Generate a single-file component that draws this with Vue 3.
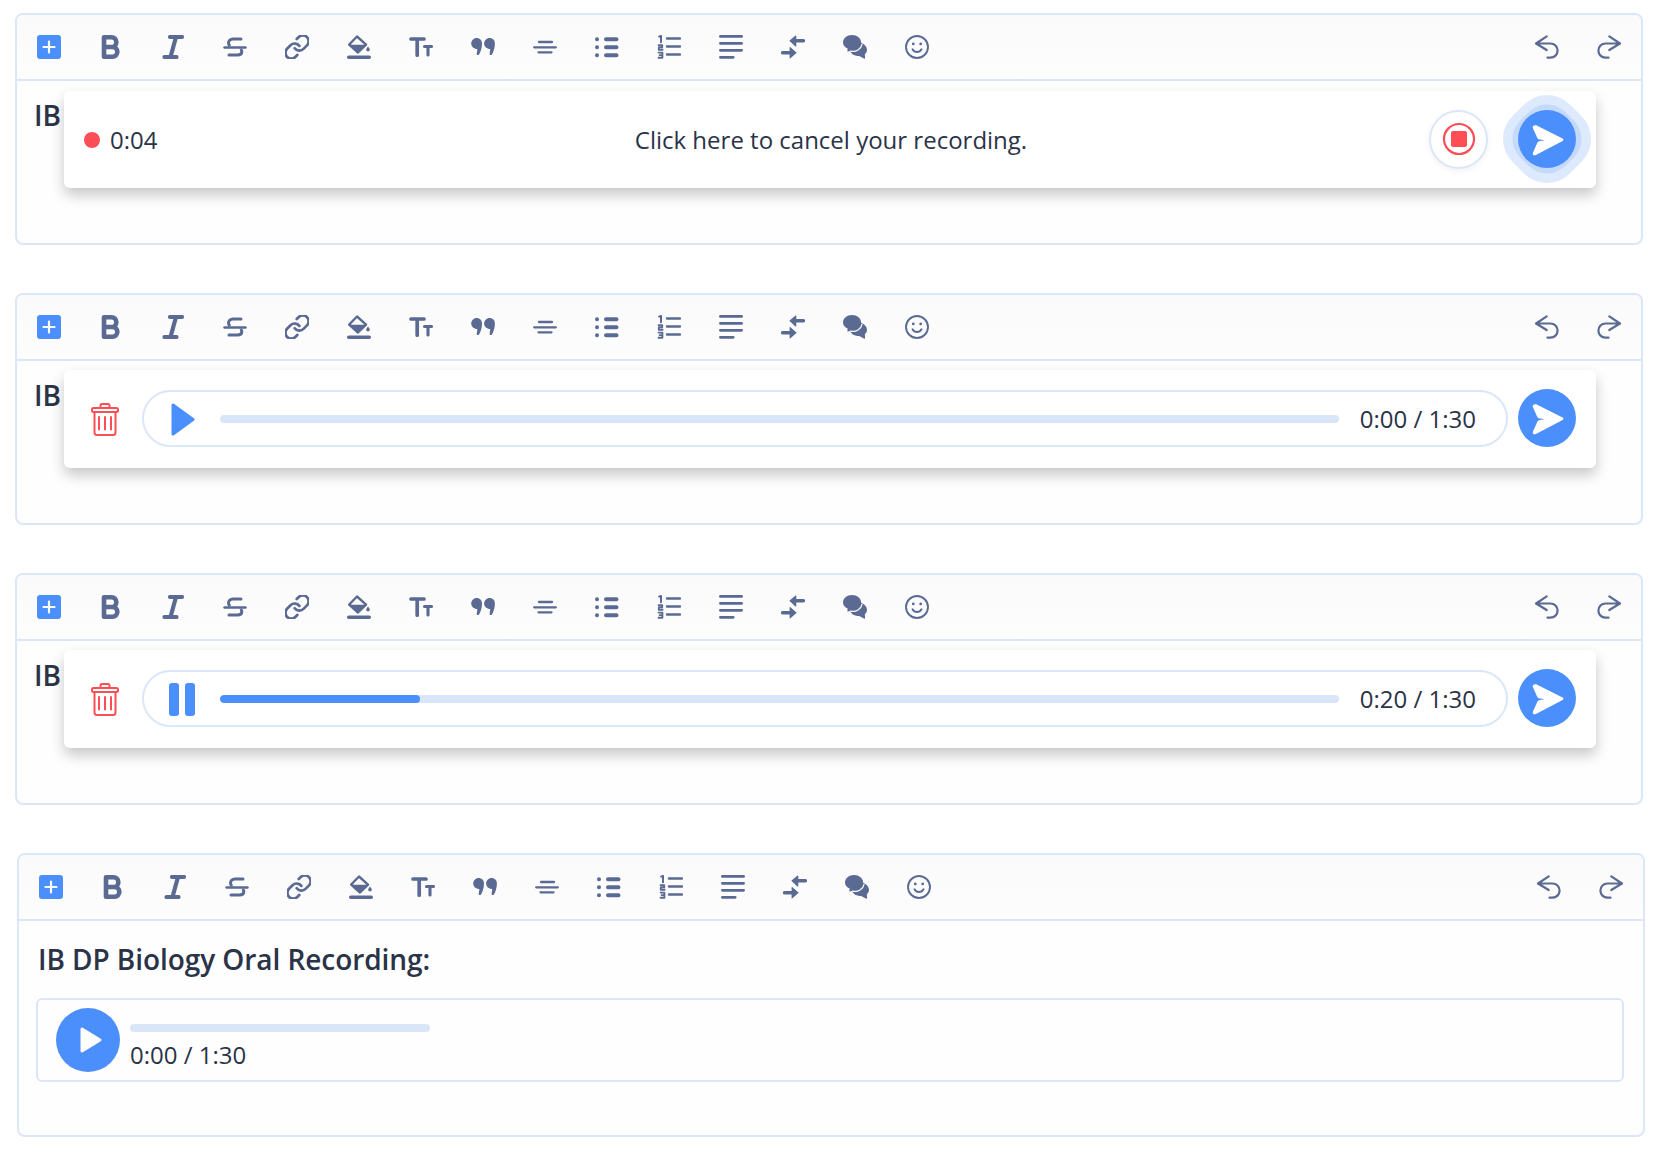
<template>
  <div class="page">
    <section
      v-for="card in cards"
      :key="card.id"
      :class="['editor', card.mode === 'saved' ? 'saved' : '']"
    >
      <div class="toolbar">
        <svg
          v-for="tool in tools"
          :key="tool.name"
          :class="['tool', tool.name]"
          viewBox="0 0 24 24"
          width="24"
          height="24"
        >
          <path
            v-for="(part, i) in tool.parts"
            :key="i"
            :d="part.d"
            :fill="part.fill || 'none'"
            :stroke="part.sw ? part.stroke || '#5a6a92' : 'none'"
            :stroke-width="part.sw || 0"
            :transform="part.transform"
            stroke-linecap="round"
            stroke-linejoin="round"
          />
        </svg>
      </div>

      <div class="body">
        <template v-if="card.mode === 'saved'">
          <h2 class="title">IB DP Biology Oral Recording:</h2>
          <div class="player">
            <div class="player-play">
              <svg viewBox="0 0 24 28" width="24" height="28">
                <path d="M3 3 21 14 3 25z" fill="#fff" stroke="#fff" stroke-width="3" stroke-linejoin="round" />
              </svg>
            </div>
            <div class="player-info">
              <div class="track"></div>
              <div class="player-time">{{ card.time }}</div>
            </div>
          </div>
        </template>

        <template v-else>
          <h2 class="title">IB</h2>

          <div v-if="card.mode === 'recording'" class="popup recording">
            <div class="rec-time">
              <span class="rec-dot"></span>
              <span>0:04</span>
            </div>
            <div class="rec-hint">Click here to cancel your recording.</div>
            <div class="rec-actions">
              <button class="stop">
                <svg viewBox="0 0 34 34" width="34" height="34">
                  <circle cx="17" cy="17" r="15" fill="none" stroke="#ff4d55" stroke-width="2.2" />
                  <rect x="9" y="9" width="16" height="16" rx="2" fill="#ff4d55" />
                </svg>
              </button>
              <button class="send halo">
                <svg viewBox="0 0 58 58" width="58" height="58">
                  <path :d="sendPath" fill="#fff" />
                </svg>
              </button>
            </div>
          </div>

          <div v-else class="popup review">
            <svg class="trash" viewBox="0 0 28 33" width="28" height="33" fill="none" stroke="#ff4d55" stroke-width="2" stroke-linecap="round" stroke-linejoin="round">
              <path d="M9.5 5V2.5A1.5 1.5 0 0 1 11 1h6a1.5 1.5 0 0 1 1.5 1.5V5" />
              <rect x="1" y="5" width="26" height="4" rx="1.5" />
              <path d="M3.5 9.5V29.5a2.5 2.5 0 0 0 2.5 2.5h16a2.5 2.5 0 0 0 2.5-2.5V9.5" />
              <path d="M8 14v12.5M14 14v12.5M20 14v12.5" />
            </svg>
            <div class="bar">
              <svg v-if="card.mode === 'ready'" class="bar-icon" viewBox="0 0 24 33" width="24" height="33">
                <path d="M2 2 22 16.5 2 31z" fill="#4b8ffc" stroke="#4b8ffc" stroke-width="3" stroke-linejoin="round" />
              </svg>
              <svg v-else class="bar-icon pause" viewBox="0 0 26 33" width="26" height="33">
                <rect x="0" y="0" width="10" height="33" rx="3" fill="#4b8ffc" />
                <rect x="16" y="0" width="10" height="33" rx="3" fill="#4b8ffc" />
              </svg>
              <div class="track grow">
                <div class="track-fill" :style="{ width: card.progress + '%' }"></div>
              </div>
              <span class="bar-time">{{ card.time }}</span>
            </div>
            <button class="send">
              <svg viewBox="0 0 58 58" width="58" height="58">
                <path :d="sendPath" fill="#fff" />
              </svg>
            </button>
          </div>
        </template>
      </div>
    </section>
  </div>
</template>

<script setup>
const sendPath =
  "M17.2 14.800 44.600 28.600c1.100.6 1.100 1.700 0 2.300L18 45c-2.200 1-3.900-.6-3-2.600l4-9c.6-1.400 1.500-2.200 3-2.400l5-.7-5-.7c-1.500-.2-2.400-1-3-2.400l-4.100-9c-.9-2 1-3.400 2.300-2.400z";

const cards = [
  { id: 1, mode: "recording" },
  { id: 2, mode: "ready", progress: 0, time: "0:00 / 1:30" },
  { id: 3, mode: "playing", progress: 17.9, time: "0:20 / 1:30" },
  { id: 4, mode: "saved", time: "0:00 / 1:30" },
];

const c = "#5a6a92";

const tools = [
  {
    name: "add",
    parts: [
      { d: "M3 0h18a3 3 0 0 1 3 3v18a3 3 0 0 1-3 3H3a3 3 0 0 1-3-3V3a3 3 0 0 1 3-3z", fill: "#4b8ffc" },
      { d: "M12 6.500v11M6.500 12h11", sw: 2.2, stroke: "#fff" },
    ],
  },
  { name: "bold", parts: [{ d: "M5 2.300h7.500a4.800 4.800 0 0 1 0 9.700H5zM5 12h8.500a4.850 4.850 0 0 1 0 9.700H5z", sw: 4.6 }] },
  { name: "italic", parts: [{ d: "M9 2h12M3.500 22h12M15 2 9.500 22", sw: 4.2 }] },
  {
    name: "strike",
    parts: [
      { d: "M1.500 12.500h21", sw: 2.4 },
      { d: "M18 4h-8C7 4 5.500 6 5.500 8c0 .9.3 1.600.8 2.200M6 20h8.500c2.800 0 4.300-1.500 4.300-3.300 0-.7-.2-1.200-.5-1.700", sw: 3 },
    ],
  },
  {
    name: "link",
    parts: [
      { d: "M10 13a5 5 0 0 0 7.540.54l3-3a5 5 0 0 0-7.070-7.070l-1.720 1.710", sw: 2.3, transform: "translate(-2 -2) scale(1.170)" },
      { d: "M14 11a5 5 0 0 0-7.540-.54l-3 3a5 5 0 0 0 7.070 7.070l1.710-1.710", sw: 2.3, transform: "translate(-2 -2) scale(1.170)" },
    ],
  },
  {
    name: "fill",
    parts: [
      { d: "M10 1.500 19 9.700 11 17.500 2.200 9.500z", sw: 2.4 },
      { d: "M2.500 9.800h16.500L11 17.800z", fill: c },
      { d: "M21 11.500c1 1.300 1.800 2.200 1.800 3.200a1.800 1.800 0 0 1-3.600 0c0-1 .8-1.900 1.800-3.200z", fill: c },
      { d: "M1.800 22.200h20.400", sw: 3.600 },
    ],
  },
  {
    name: "size",
    parts: [
      { d: "M2 4h13M8.200 4v16.200", sw: 3.700 },
      { d: "M15.500 11.500h7M19 11.500v8.500", sw: 3.100 },
    ],
  },
  {
    name: "quote",
    parts: [
      {
        d: "M5.700 3c3.100 0 5.300 2.300 5.300 5.500 0 4.400-1.500 8.800-3 11-.7 1-2.300.7-2.300-.6 0-1.300.6-2.400.6-4.900-3.300 0-6.100-2.500-6.100-5.500S2.600 3 5.700 3zM18.600 3c3.100 0 5.300 2.300 5.300 5.500 0 4.400-1.500 8.800-3 11-.7 1-2.300.7-2.300-.6 0-1.300.6-2.400.6-4.900-3.300 0-6.100-2.500-6.100-5.500S15.500 3 18.600 3z",
        fill: c,
      },
    ],
  },
  { name: "rule", parts: [{ d: "M6 7h13M1.200 12.300h21.600M5.500 17.300h13", sw: 2.3 }] },
  {
    name: "list",
    parts: [
      { d: "M11 4.300h10.500M11 12.300h10.500M11 20.300h10.500", sw: 4 },
      { d: "M2 2.300a2 2 0 1 0 0 4 2 2 0 0 0 0-4zM2 10.300a2 2 0 1 0 0 4 2 2 0 0 0 0-4zM2 18.300a2 2 0 1 0 0 4 2 2 0 0 0 0-4z", fill: c },
    ],
  },
  {
    name: "olist",
    parts: [
      { d: "M10 3.500h13M10 11.400h13M10 19.500h13", sw: 2.5 },
      { d: "M2.200 1.600 4 .8V7.200", sw: 2 },
      { d: "M1.600 10.200h3.600v2.200H1.800v2.400h3.800", sw: 1.9 },
      { d: "M1.600 17.600h3.800v2.500H2.600m2.800 0v2.700H1.600", sw: 1.9 },
    ],
  },
  { name: "justify", parts: [{ d: "M1.400 1.400h21.200M1.400 8.300h21.200M1.400 15.300h21.200M1.400 22.300h12.800", sw: 2.8 }] },
  {
    name: "compress",
    parts: [
      { d: "M8.300 5.800 14.500.5c.4-.3.8 0 .8.4V4h7a1.800 1.800 0 0 1 0 3.600h-7V11c0 .5-.5.7-.9.4z", fill: c },
      { d: "M15.700 17.800 9.500 23.300c-.4.3-.9.1-.9-.4v-3.300h-7a1.800 1.800 0 0 1 0-3.600h7v-3.400c0-.5.5-.7.9-.4z", fill: c },
    ],
  },
  {
    name: "chat",
    parts: [
      { d: "M16.500 7.500c4.500.8 7.500 3.800 7.500 7.500 0 1.700-.8 3.200-2.200 4.200l.3 3.600c.1.800-.6 1.100-1.200.7L16.200 21c-4.200 0-7.800-1.500-8.700-4.500z", fill: c },
      { d: "M9 0c5 0 9.200 3.300 9.200 7.700S14 15.500 9 15.500l-1.500-.1-2 1.100c-.6.300-1.200-.1-1.100-.8l.2-2.200C1.800 12.100 0 10 0 7.700 0 3.300 4 0 9 0z", fill: c },
      { d: "M8.500 16.300c4.500.6 9.500-1.800 10.500-7", sw: 1.200, stroke: "#fcfcfc" },
    ],
  },
  {
    name: "smile",
    parts: [
      { d: "M12 1a11 11 0 1 0 0 22 11 11 0 0 0 0-22z", sw: 1.9 },
      { d: "M7.500 14.300c1 1.800 2.600 2.700 4.500 2.700s3.500-.9 4.500-2.700", sw: 1.9 },
      { d: "M8.300 7.500a1.400 1.400 0 1 0 0 2.800 1.400 1.400 0 0 0 0-2.800zM15.700 7.500a1.400 1.400 0 1 0 0 2.800 1.400 1.400 0 0 0 0-2.800z", fill: c },
    ],
  },
  { name: "undo", parts: [{ d: "M11.700 1.300 1 8.500 11.700 15M1 8.500h14.500a7.100 7.100 0 0 1 0 14.200h-3", sw: 2.2 }] },
  { name: "redo", parts: [{ d: "M12.300 1.300 23 8.500 12.300 15M23 8.500H8.500a7.100 7.100 0 0 0 0 14.200h3", sw: 2.2 }] },
];
</script>

<style>
body {
  background: #fff;
}
</style>

<style scoped>
.page {
  display: flex;
  flex-direction: column;
  gap: 48px;
  width: 1660px;
  padding: 13px 0 0 15px;
  box-sizing: border-box;
  font-family: "Open Sans", "Noto Sans", sans-serif;
  color: #2a3347;
}

.editor {
  width: 1628px;
  height: 232px;
  box-sizing: border-box;
  border: 2px solid #dbe7f8;
  border-radius: 8px;
  background: #fefefe;
}
.editor.saved {
  height: 284px;
  margin-left: 2px;
}

.toolbar {
  display: flex;
  align-items: center;
  gap: 38px;
  height: 66px;
  box-sizing: border-box;
  padding: 0 20px;
  border-bottom: 2px solid #dbe7f8;
  border-radius: 6px 6px 0 0;
  background: linear-gradient(#fafafa, #fdfdfd);
}
.tool {
  flex: none;
  display: block;
}
.tool.undo {
  margin-left: auto;
}

.body {
  position: relative;
  padding: 15px 17px 0;
}
.saved .body {
  padding-top: 19px;
}
.title {
  margin: 0;
  font-size: 28px;
  line-height: 38px;
  font-weight: 600;
}
.saved .title {
  padding-left: 2px;
  letter-spacing: -0.07px;
}

.popup {
  position: absolute;
  top: 9px;
  left: 47px;
  width: 1532px;
  height: 98px;
  box-sizing: border-box;
  padding: 0 20px 2px;
  border-radius: 6px;
  background: #fff;
  box-shadow: 0 7px 14px rgba(0, 0, 0, 0.22);
}
.popup.recording {
  top: 10px;
  height: 97px;
  padding-bottom: 1px;
  display: grid;
  grid-template-columns: 1fr auto 1fr;
  align-items: center;
}
.popup.review {
  display: flex;
  align-items: center;
}

.rec-time {
  display: flex;
  align-items: center;
  gap: 10px;
  font-size: 24px;
}
.rec-dot {
  width: 16px;
  height: 16px;
  margin-top: 2px;
  border-radius: 50%;
  background: #ff4d55;
}
.rec-hint {
  margin-left: 2px;
  font-size: 24px;
}
.rec-actions {
  display: flex;
  justify-content: flex-end;
  align-items: center;
  gap: 30px;
}

button {
  padding: 0;
  border: none;
  background: none;
}
.stop {
  display: flex;
  align-items: center;
  justify-content: center;
  width: 59px;
  height: 59px;
  box-sizing: border-box;
  border: 2px solid #dbe7f8;
  border-radius: 50%;
  background: #fff;
  box-shadow: 0 2px 6px rgba(0, 0, 0, 0.06);
}
.send {
  position: relative;
  flex: none;
  width: 58px;
  height: 58px;
  border-radius: 50%;
  background: #4b8ffc;
}
.send svg {
  position: relative;
  display: block;
}
.send.halo::before,
.send.halo::after {
  content: "";
  position: absolute;
  left: 50%;
  top: 50%;
  transform: translate(-50%, -50%) rotate(45deg);
}
.send.halo::before {
  width: 81px;
  height: 81px;
  border-radius: 32px;
  background: #dde9fd;
}
.send.halo::after {
  width: 64px;
  height: 64px;
  border-radius: 26px;
  background: #c5d9fa;
}
.send.halo svg {
  z-index: 1;
  border-radius: 50%;
  background: #4b8ffc;
}

.trash {
  flex: none;
  margin: 2px 23px 0 7px;
}
.bar {
  flex: 1;
  display: flex;
  align-items: center;
  height: 57px;
  box-sizing: border-box;
  margin-right: 10px;
  padding: 0 30px 0 26px;
  border: 2px solid #dbe7f8;
  border-radius: 29px;
}
.bar-icon {
  flex: none;
  margin: 2px 25px 0 1px;
}
.bar-icon.pause {
  margin-left: -1px;
}
.track {
  height: 8px;
  border-radius: 4px;
  background: #d9e6f8;
  overflow: hidden;
}
.track.grow {
  flex: 1;
  margin-top: 2px;
}
.track-fill {
  height: 100%;
  border-radius: 4px;
  background: #4b8ffc;
}
.bar-time {
  flex: none;
  margin-left: 21px;
  font-size: 24px;
}

.player {
  display: flex;
  gap: 10px;
  height: 84px;
  box-sizing: border-box;
  margin: 20px 2px 0 0;
  padding: 8px 18px;
  border: 2px solid #dbe7f8;
  border-radius: 6px;
}
.player-play {
  display: flex;
  align-items: center;
  justify-content: center;
  flex: none;
  width: 64px;
  height: 64px;
  padding-left: 5px;
  box-sizing: border-box;
  border-radius: 50%;
  background: #4b8ffc;
}
.player-info {
  width: 300px;
  padding-top: 16px;
}
.player-time {
  margin-top: 6px;
  font-size: 24px;
  line-height: 33px;
}
</style>
